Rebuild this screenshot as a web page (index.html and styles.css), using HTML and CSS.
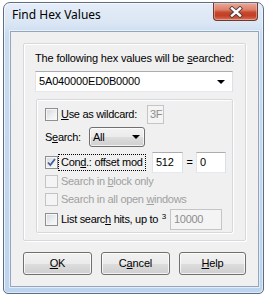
FILE: index.html
```html
<!DOCTYPE html>
<html>
<head>
<meta charset="utf-8">
<title>Find Hex Values</title>
<link rel="stylesheet" href="styles.css">
</head>
<body>
<div class="win">
  <div class="titlebar">
    <span class="title">Find Hex Values</span>
    <div class="close">
      <svg width="16" height="12" viewBox="0 0 16 12">
        <path d="M4 2.5 L12 9.5 M12 2.5 L4 9.5" stroke="#4a3a38" stroke-width="4.2" stroke-linecap="square" fill="none"/>
        <path d="M4 2.5 L12 9.5 M12 2.5 L4 9.5" stroke="#ffffff" stroke-width="2.4" stroke-linecap="square" fill="none"/>
      </svg>
    </div>
  </div>
  <div class="client">
    <div class="group outer">
      <div class="lbl">The following hex values will be <u>s</u>earched:</div>
      <div class="combo"><span>5A040000ED0B0000</span><i class="arrow"></i></div>
      <div class="group inner">
        <div class="row r1">
          <div class="cl w102"><span class="cb"></span><span class="txt"><u>U</u>se as wildcard:</span></div>
          <div class="edit dis w17">3F</div>
        </div>
        <div class="row r2">
          <span class="slbl">S<u>e</u>arch:</span>
          <div class="dd"><span>All</span><i class="arrow"></i></div>
        </div>
        <div class="row r3">
          <div class="cl w107">
            <span class="cb">
              <svg width="11" height="11" viewBox="0 0 11 11"><path d="M2 5.5 L4.3 8 L9 2" stroke="#4a5f97" stroke-width="1.8" fill="none"/></svg>
            </span>
            <span class="txt focus">Con<u>d</u>.: offset mod</span>
          </div>
          <div class="edit w31">512</div>
          <span class="eq">=</span>
          <div class="edit w30">0</div>
        </div>
        <div class="row r4">
          <div class="cl dis"><span class="cb"></span><span class="txt">Search in <u>b</u>lock only</span></div>
        </div>
        <div class="row r5">
          <div class="cl dis"><span class="cb"></span><span class="txt">Search in all open <u>w</u>indows</span></div>
        </div>
        <div class="row r6">
          <div class="cl w125"><span class="cb"></span><span class="txt">List searc<u>h</u> hits, up to <sup class="sup">3</sup></span></div>
          <div class="edit dis w52">10000</div>
        </div>
      </div>
    </div>
    <div class="buttons">
      <div class="btn b69"><u>O</u>K</div>
      <div class="btn b69">C<u>a</u>ncel</div>
      <div class="btn b67"><u>H</u>elp</div>
    </div>
  </div>
</div>
</body>
</html>
```

FILE: styles.css
```css
* { box-sizing: border-box; }
html, body { margin: 0; padding: 0; }
body {
  width: 265px;
  height: 295px;
  background: #ffffff;
  overflow: hidden;
  font-family: "Liberation Sans", Arial, sans-serif;
  font-size: 11px;
  line-height: 13px;
  letter-spacing: -0.15px;
  color: #000;
}
u { text-decoration: underline; text-underline-offset: 1px; }

.win {
  margin: 2px 0 0 3px;
  width: 261px;
  height: 292px;
  border: 1px solid #5d6e84;
  border-radius: 7px 7px 5px 5px;
  background: linear-gradient(to bottom, #e4edf8 0, #dbe6f4 20px, #c9dcf1 32px, #bcd4ee 100%);
  box-shadow: inset 1px 1px 0 rgba(255,255,255,0.7), inset -1px -1px 0 rgba(255,255,255,0.5);
  display: flex;
  flex-direction: column;
}

.titlebar {
  height: 28px;
  display: flex;
  align-items: flex-start;
  flex-shrink: 0;
}
.title {
  font-family: "Noto Sans", "Open Sans", sans-serif;
  font-size: 12px;
  line-height: 16px;
  letter-spacing: 0;
  padding: 4px 0 0 8px;
  color: #000;
}
.close {
  margin-left: auto;
  margin-right: 5px;
  width: 45px;
  height: 18px;
  border: 1px solid #6b3a32;
  border-top: none;
  border-radius: 0 0 4px 4px;
  background: linear-gradient(to bottom, #e9a999 0%, #dc7f69 40%, #c8472e 55%, #c33e25 75%, #d5735b 100%);
  box-shadow: inset 0 0 0 1px rgba(255,210,200,0.45);
  display: flex;
  align-items: center;
  justify-content: center;
}

.client {
  margin: 0 4px 6px 6px;
  height: 256px;
  border: 1px solid #94a6be;
  background: #f0f0f0;
  box-shadow: 0 0 0 1px rgba(255,255,255,0.55);
  display: flex;
  flex-direction: column;
  padding: 11px 0 0 12px;
}

.group {
  border: 1px solid #d5d9de;
  border-radius: 2px;
  box-shadow: inset 1px 1px 0 #ffffff, 1px 1px 0 #ffffff;
}
.outer {
  width: 223px;
  height: 198px;
  padding: 8px 0 0 11px;
  display: flex;
  flex-direction: column;
}
.lbl { height: 13px; white-space: nowrap; }

.combo {
  margin-top: 6px;
  width: 198px;
  height: 21px;
  background: #fff;
  border: 1px solid;
  border-color: #abadb3 #dbdfe6 #e3e9ef #e2e3ea;
  display: flex;
  align-items: center;
  padding: 0 7px 0 3px;
}
.combo span { flex: 1; }

.arrow {
  width: 0;
  height: 0;
  border-left: 4px solid transparent;
  border-right: 4px solid transparent;
  border-top: 4px solid #000;
}

.inner {
  margin: 7px 0 0 1px;
  width: 197px;
  height: 134px;
  padding: 5px 0 0 8px;
  display: flex;
  flex-direction: column;
  letter-spacing: -0.3px;
}

.row { display: flex; align-items: center; }
.r1 { height: 19px; }
.r2 { height: 20px; margin-top: 3px; }
.r3 { height: 21px; margin-top: 5px; }
.r4 { height: 16px; }
.r5 { height: 16px; margin-top: 2px; }
.r6 { height: 21px; margin-top: 2px; }

.cl { display: flex; align-items: center; height: 100%; flex-shrink: 0; }
.w102 { width: 102px; }
.w107 { width: 107px; }
.w125 { width: 125px; }

.cb {
  width: 13px;
  height: 13px;
  border: 1px solid #8e8f8f;
  background: linear-gradient(135deg, #d4d8dd 0%, #eef0f2 60%, #fbfbfb 100%);
  box-shadow: inset 0 0 0 1px #f6f6f6;
  flex-shrink: 0;
  display: flex;
  align-items: center;
  justify-content: center;
}
.cb svg { display: block; }
.txt { margin-left: 2px; padding: 0 1px; white-space: nowrap; }
.cl.dis .txt { color: #a0a0a0; }
.cl.dis .cb {
  border-color: #c4c4c4;
  background: #f4f4f4;
  box-shadow: none;
}
.focus {
  outline: 1px dotted #000;
  outline-offset: 1px;
}
.sup {
  font-size: 8px;
  line-height: 0;
  vertical-align: 4px;
  margin-left: 1px;
}

.slbl { width: 44px; }
.dd {
  width: 56px;
  height: 20px;
  border: 1px solid #707070;
  border-radius: 3px;
  background: linear-gradient(to bottom, #f2f2f2 0%, #ebebeb 50%, #dddddd 51%, #cfcfcf 100%);
  box-shadow: inset 0 0 0 1px rgba(255,255,255,0.7);
  display: flex;
  align-items: center;
  padding: 0 4px 0 3px;
}
.dd span { flex: 1; }

.edit {
  height: 21px;
  background: #fff;
  border: 1px solid;
  border-color: #abadb3 #dbdfe6 #e3e9ef #e2e3ea;
  padding: 0 0 0 3px;
  display: flex;
  align-items: center;
  flex-shrink: 0;
}
.edit.dis {
  background: #f4f4f4;
  border-color: #c5c5c5;
  color: #8d8d8d;
}
.r1 .edit { height: 19px; padding-left: 2px; }
.w17 { width: 17px; }
.w31 { width: 31px; }
.w30 { width: 30px; }
.w52 { width: 52px; }
.eq { width: 13px; text-align: center; }

.buttons {
  margin-top: 11px;
  display: flex;
  gap: 9px;
}
.btn {
  height: 23px;
  border: 1px solid #707070;
  border-radius: 3px;
  background: linear-gradient(to bottom, #f2f2f2 0%, #ebebeb 50%, #dddddd 51%, #cfcfcf 100%);
  box-shadow: inset 0 0 0 1px rgba(255,255,255,0.75);
  display: flex;
  align-items: center;
  justify-content: center;
}
.b69 { width: 69px; }
.b67 { width: 67px; }
```
